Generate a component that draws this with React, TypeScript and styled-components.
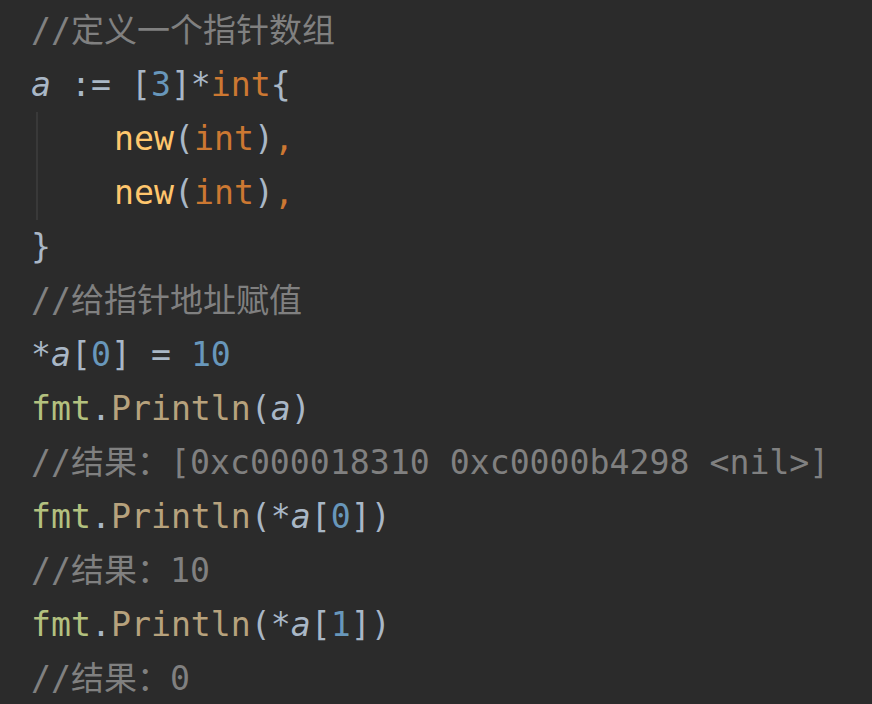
import React from "react";
import styled, { createGlobalStyle } from "styled-components";

const Global = createGlobalStyle`
  html, body {
    margin: 0;
    padding: 0;
    background: #2b2b2b;
  }
`;

const Editor = styled.div`
  width: 872px;
  height: 704px;
  box-sizing: border-box;
  padding: 4px 0 0 31px;
  background: #2b2b2b;
  font-family: "DejaVu Sans Mono", "Noto Sans CJK SC", monospace;
  font-size: 33.2px;
  line-height: 54px;
  color: #a9b7c6;
  overflow: hidden;
`;

const Line = styled.div`
  white-space: pre;
  height: 54px;
`;

const IndentBlock = styled.div`
  margin-left: 5px;
  padding-left: 76px;
  border-left: 2px solid #393939;
`;

type Kind = "comment" | "num" | "kw" | "fn" | "pkg" | "call" | "plain";

const colors: Record<Kind, string> = {
  comment: "#808080",
  num: "#6897bb",
  kw: "#cc7832",
  fn: "#ffc66d",
  pkg: "#b3c17f",
  call: "#b7a27d",
  plain: "#a9b7c6",
};

const Tok = styled.span<{ $k: Kind; $italic?: boolean }>`
  color: ${(p) => colors[p.$k]};
  font-style: ${(p) => (p.$italic ? "italic" : "normal")};
`;

const Cjk = styled.span`
  font-family: "Noto Sans CJK SC", sans-serif;
  line-height: 1;
  font-size: 33px;
`;

const A = () => (
  <Tok $k="plain" $italic>
    a
  </Tok>
);

export default function App() {
  return (
    <>
      <Global />
      <Editor>
        <Line>
          <Tok $k="comment">
            //<Cjk>定义一个指针数组</Cjk>
          </Tok>
        </Line>
        <Line>
          <A />
          <Tok $k="plain"> := [</Tok>
          <Tok $k="num">3</Tok>
          <Tok $k="plain">]*</Tok>
          <Tok $k="kw">int</Tok>
          <Tok $k="plain">{"{"}</Tok>
        </Line>
        <IndentBlock>
          <Line>
            <Tok $k="fn">new</Tok>
            <Tok $k="plain">(</Tok>
            <Tok $k="kw">int</Tok>
            <Tok $k="plain">)</Tok>
            <Tok $k="kw">,</Tok>
          </Line>
          <Line>
            <Tok $k="fn">new</Tok>
            <Tok $k="plain">(</Tok>
            <Tok $k="kw">int</Tok>
            <Tok $k="plain">)</Tok>
            <Tok $k="kw">,</Tok>
          </Line>
        </IndentBlock>
        <Line>
          <Tok $k="plain">{"}"}</Tok>
        </Line>
        <Line>
          <Tok $k="comment">
            //<Cjk>给指针地址赋值</Cjk>
          </Tok>
        </Line>
        <Line>
          <Tok $k="plain">*</Tok>
          <A />
          <Tok $k="plain">[</Tok>
          <Tok $k="num">0</Tok>
          <Tok $k="plain">] = </Tok>
          <Tok $k="num">10</Tok>
        </Line>
        <Line>
          <Tok $k="pkg">fmt</Tok>
          <Tok $k="plain">.</Tok>
          <Tok $k="call">Println</Tok>
          <Tok $k="plain">(</Tok>
          <A />
          <Tok $k="plain">)</Tok>
        </Line>
        <Line>
          <Tok $k="comment">
            //<Cjk>结果：</Cjk>[0xc000018310 0xc0000b4298 &lt;nil&gt;]
          </Tok>
        </Line>
        <Line>
          <Tok $k="pkg">fmt</Tok>
          <Tok $k="plain">.</Tok>
          <Tok $k="call">Println</Tok>
          <Tok $k="plain">(*</Tok>
          <A />
          <Tok $k="plain">[</Tok>
          <Tok $k="num">0</Tok>
          <Tok $k="plain">])</Tok>
        </Line>
        <Line>
          <Tok $k="comment">
            //<Cjk>结果：</Cjk>10
          </Tok>
        </Line>
        <Line>
          <Tok $k="pkg">fmt</Tok>
          <Tok $k="plain">.</Tok>
          <Tok $k="call">Println</Tok>
          <Tok $k="plain">(*</Tok>
          <A />
          <Tok $k="plain">[</Tok>
          <Tok $k="num">1</Tok>
          <Tok $k="plain">])</Tok>
        </Line>
        <Line>
          <Tok $k="comment">
            //<Cjk>结果：</Cjk>0
          </Tok>
        </Line>
      </Editor>
    </>
  );
}
